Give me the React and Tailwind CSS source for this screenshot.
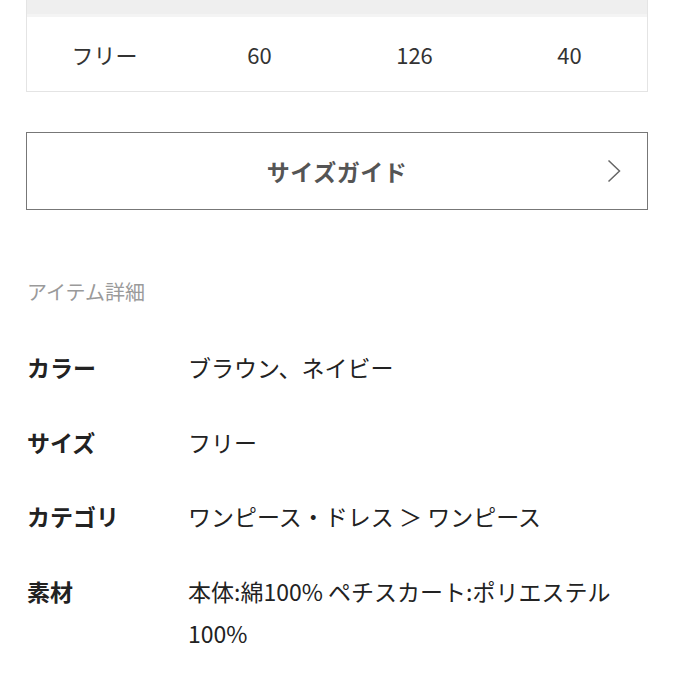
export default function App() {
  const font = { fontFamily: '"Noto Sans CJK JP", "Noto Sans", sans-serif' };
  const rows = [
    ["カラー", "ブラウン、ネイビー"],
    ["サイズ", "フリー"],
    ["カテゴリ", "ワンピース・ドレス ＞ ワンピース"],
    ["素材", "本体:綿100% ペチスカート:ポリエステル 100%"],
  ];
  return (
    <div className="w-[674px] h-[674px] bg-white overflow-hidden" style={font}>
      <div className="mx-[26px]">
        <div className="border-x border-b border-[#e4e4e4]">
          <div className="h-[17px] bg-[#efefef] border-b-[3px] border-[#f4f4f4]"></div>
          <div className="grid grid-cols-4 h-[74px] items-center text-[22px] text-[#333] text-center">
            <div>フリー</div>
            <div>60</div>
            <div>126</div>
            <div>40</div>
          </div>
        </div>
        <div className="mt-[40px] h-[78px] border-[1.5px] border-[#777] relative flex items-center justify-center">
          <span className="text-[23px] font-bold text-[#555] tracking-[0.5px]">サイズガイド</span>
          <svg className="absolute right-[26px] top-1/2 -translate-y-1/2" width="14" height="23" viewBox="0 0 14 23" fill="none">
            <path d="M1.5 1 L12.5 11.5 L1.5 22" stroke="#666" strokeWidth="1.5" />
          </svg>
        </div>
        <div className="mt-[68px] text-[20px] text-[#9a9a9a] leading-[28px] pl-[1px]">アイテム詳細</div>
        <div className="mt-[40px] pl-[1px]">
          {rows.map(([k, v], i) => (
            <div key={i} className="flex text-[23px] leading-[42px] mb-[32.5px]">
              <div className="w-[161px] shrink-0 font-bold text-[#222]">{k}</div>
              <div className="text-[#222] w-[450px]">{v}</div>
            </div>
          ))}
        </div>
      </div>
    </div>
  );
}
